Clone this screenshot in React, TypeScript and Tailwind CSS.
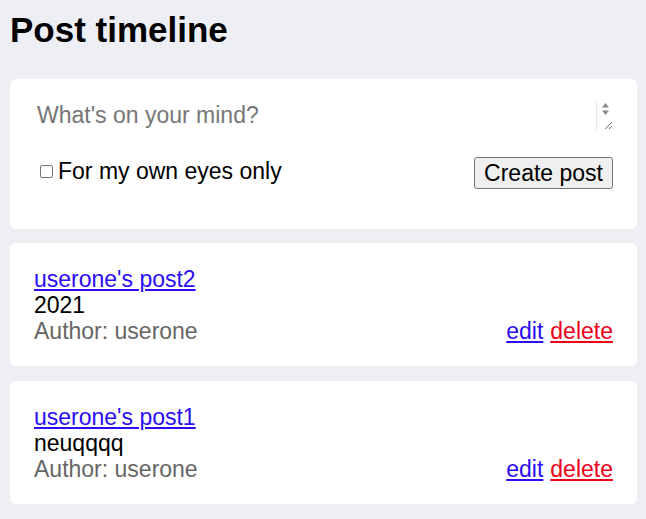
import React from 'react';

type Post = {
  id: number;
  title: string;
  body: string;
  author: string;
};

const posts: Post[] = [
  { id: 2, title: "userone's post2", body: '2021', author: 'userone' },
  { id: 1, title: "userone's post1", body: 'neuqqqq', author: 'userone' },
];

// textarea scroll arrows + resize grip, drawn since the native ones vary
const TextareaChrome: React.FC = () => (
  <div className="absolute right-0 top-0 flex h-full w-[17px] flex-col items-center border-l border-[#e6e6e6] bg-white">
    <svg width="9" height="14" viewBox="0 0 9 14" className="mt-[1px]">
      <path d="M4.5 1 L8 5.5 H1 Z" fill="#8a8a8a" />
      <path d="M4.5 13 L8 8.5 H1 Z" fill="#8a8a8a" />
    </svg>
    <div className="flex-1" />
    <svg width="10" height="10" viewBox="0 0 10 10" className="mb-[1px] self-end">
      <path d="M9 2 L2 9 M9 6 L6 9" stroke="#6b6b6b" strokeWidth="1" />
    </svg>
  </div>
);

const PostCard: React.FC<{ post: Post }> = ({ post }) => (
  <div className="mb-[15px] rounded-[6px] bg-white px-[24px] pb-[22px] pt-[23px]">
    <a href="#" className="block w-fit text-[#2a0cf5] underline">
      {post.title}
    </a>
    <div className="text-black">{post.body}</div>
    <div className="flex items-center justify-between">
      <span className="text-[#666666]">Author: {post.author}</span>
      <span className="flex gap-[7px]">
        <a href="#" className="text-[#2a0cf5] underline">edit</a>
        <a href="#" className="text-[#ee0018] underline">delete</a>
      </span>
    </div>
  </div>
);

export default function App() {
  return (
    <div
      className="min-h-[519px] bg-[#eeeff4] pl-[10px] pr-[9px] text-[23px] leading-[26px] text-black"
      style={{ fontFamily: '"Liberation Sans", Arial, sans-serif' }}
    >
      <h1 className="pb-[29px] pt-[10px] text-[35px] font-bold leading-[40px]">Post timeline</h1>

      <div className="mb-[14px] rounded-[6px] bg-white px-[24px] pb-[40px] pt-[22px]">
        <div className="relative h-[30px]">
          <textarea
            rows={1}
            placeholder="What's on your mind?"
            className="h-full w-full resize-none overflow-hidden bg-white pl-[3px] pt-[1px] text-[23px] leading-[26px] outline-none placeholder:text-[#767676]"
          />
          <TextareaChrome />
        </div>

        <div className="mt-[26px] flex items-start justify-between">
          <label className="flex items-center pt-[1px]">
            <input
              type="checkbox"
              className="ml-[6px] mr-[5px] h-[13px] w-[13px] appearance-none rounded-[2px] border border-[#767676] bg-white"
            />
            <span>For my own eyes only</span>
          </label>
          <button className="h-[32px] rounded-[3px] border border-[#767676] bg-[#efefef] px-[9px] text-[23px] leading-[26px]">
            Create post
          </button>
        </div>
      </div>

      {posts.map((p) => (
        <PostCard key={p.id} post={p} />
      ))}
    </div>
  );
}
